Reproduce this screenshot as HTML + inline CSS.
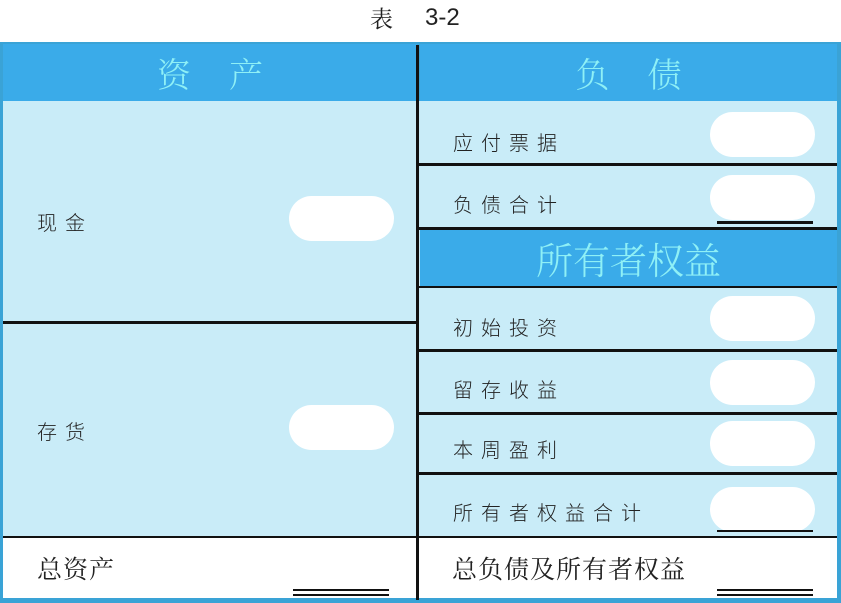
<!DOCTYPE html>
<html><head><meta charset="utf-8"><style>
body{margin:0;width:841px;height:603px;background:#fff;position:relative;overflow:hidden;font-family:"Liberation Sans","Noto Sans CJK SC",sans-serif}
div{position:absolute;box-sizing:border-box}
.hd{background:#3aabe9;color:#8ff0f6;font-family:"Noto Serif CJK SC","Noto Sans CJK SC",serif;font-size:34px;text-align:center;font-weight:300}
.lb{background:#c9ecf8}
.ln{background:#111}
.pill{background:#fff;border-radius:23px;width:105px;height:45px}
.t{font-size:20px;color:#222;letter-spacing:8px;font-family:"Noto Sans CJK SC",sans-serif;font-weight:300}
.tb{font-size:25px;color:#222;font-family:"Noto Serif CJK SC",serif;letter-spacing:1px}
.ul{height:3px;background:#111}
</style></head><body>
<div style="left:370px;top:1px;font-size:23px;color:#222;font-family:'Noto Serif CJK SC',serif">表</div>
<div style="left:425px;top:4px;font-size:24px;color:#222">3-2</div>
<!-- outer -->
<div style="left:0;top:42px;width:841px;height:561px;background:#3aa3d6"></div>
<div class="lb" style="left:3px;top:101px;width:834px;height:436px"></div>
<div style="left:3px;top:538px;width:834px;height:60px;background:#fff"></div>
<div class="hd" style="left:3px;top:44px;width:414px;height:57px;line-height:57px;letter-spacing:38px;padding-left:38px">资产</div>
<div class="hd" style="left:420px;top:44px;width:417px;height:57px;line-height:57px;letter-spacing:38px;padding-left:38px">负债</div>
<div class="hd" style="left:420px;top:230px;width:417px;height:57px;line-height:57px;font-size:37px">所有者权益</div>
<!-- lines -->
<div class="ln" style="left:416px;top:45px;width:3px;height:555px"></div>
<div class="ln" style="left:3px;top:321px;width:414px;height:3px"></div>
<div class="ln" style="left:3px;top:536px;width:834px;height:2px"></div>
<div class="ln" style="left:419px;top:163px;width:418px;height:3px"></div>
<div class="ln" style="left:419px;top:227px;width:418px;height:3px"></div>
<div class="ln" style="left:419px;top:286px;width:418px;height:2px"></div>
<div class="ln" style="left:419px;top:349px;width:418px;height:3px"></div>
<div class="ln" style="left:419px;top:412px;width:418px;height:3px"></div>
<div class="ln" style="left:419px;top:472px;width:418px;height:3px"></div>
<!-- pills -->
<div class="pill" style="left:289px;top:196px"></div>
<div class="pill" style="left:289px;top:405px"></div>
<div class="pill" style="left:710px;top:112px"></div>
<div class="pill" style="left:710px;top:175px"></div>
<div class="pill" style="left:710px;top:296px"></div>
<div class="pill" style="left:710px;top:360px"></div>
<div class="pill" style="left:710px;top:421px"></div>
<div class="pill" style="left:710px;top:487px"></div>
<!-- underlines -->
<div class="ul" style="left:717px;top:221px;width:96px"></div>
<div class="ul" style="left:717px;top:530px;width:96px;height:2px"></div>
<div class="ul" style="left:293px;top:589px;width:96px;height:2px"></div>
<div class="ul" style="left:293px;top:594px;width:96px;height:2px"></div>
<div class="ul" style="left:717px;top:589px;width:96px;height:2px"></div>
<div class="ul" style="left:717px;top:594px;width:96px;height:2px"></div>
<!-- text -->
<div class="t" style="left:37px;top:207px">现金</div>
<div class="t" style="left:37px;top:416px">存货</div>
<div class="tb" style="left:37px;top:550px">总资产</div>
<div class="t" style="left:453px;top:127px">应付票据</div>
<div class="t" style="left:453px;top:189px">负债合计</div>
<div class="t" style="left:453px;top:312px">初始投资</div>
<div class="t" style="left:453px;top:374px">留存收益</div>
<div class="t" style="left:453px;top:434px">本周盈利</div>
<div class="t" style="left:453px;top:497px">所有者权益合计</div>
<div class="tb" style="left:452px;top:550px">总负债及所有者权益</div>
</body></html>
